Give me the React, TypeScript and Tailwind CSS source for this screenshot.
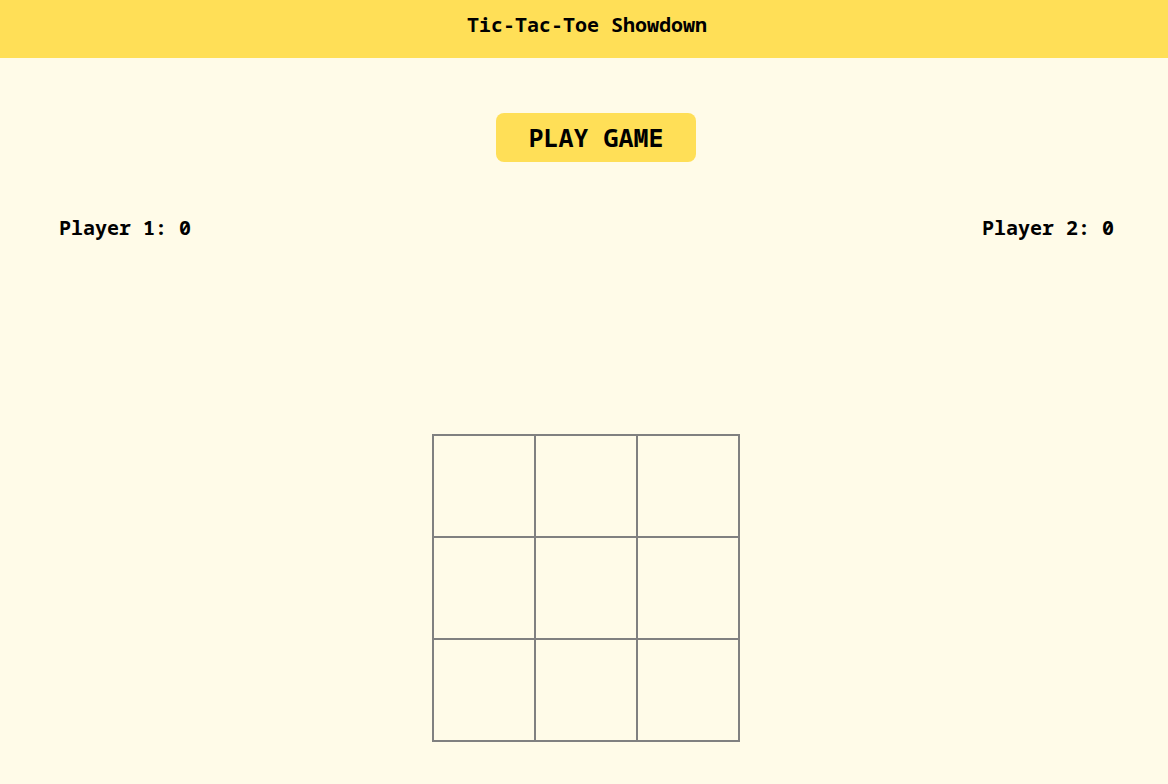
import React from 'react';

export default function App() {
  const cells = Array.from({ length: 9 });

  return (
    <div className="min-h-screen bg-[#fffbe8] font-['Noto_Sans_Mono','Noto_Sans_Mono_CJK_SC',monospace] text-black">
      {/* Header */}
      <header className="h-[58px] bg-[#ffdf57] flex justify-center pt-[11px] pl-[6px]">
        <h1 className="text-xl font-bold leading-7">Tic-Tac-Toe Showdown</h1>
      </header>

      {/* Play button */}
      <div className="flex justify-center mt-[55px] pl-[24px]">
        <button className="w-[200px] h-[49px] rounded-lg bg-[#ffdf57] text-[25px] font-bold">
          PLAY GAME
        </button>
      </div>

      {/* Scores */}
      <div className="flex justify-between pl-[59px] pr-[54px] mt-[52px]">
        <p className="text-xl font-bold leading-7">Player 1: 0</p>
        <p className="text-xl font-bold leading-7">Player 2: 0</p>
      </div>

      {/* Board */}
      <div className="flex justify-center mt-[192px] pl-[4px]">
        <div className="grid grid-cols-3 gap-[2px] p-[2px] bg-[#808080]">
          {cells.map((_, i) => (
            <div key={i} className="w-[100px] h-[100px] bg-[#fffbe8]" />
          ))}
        </div>
      </div>
    </div>
  );
}
